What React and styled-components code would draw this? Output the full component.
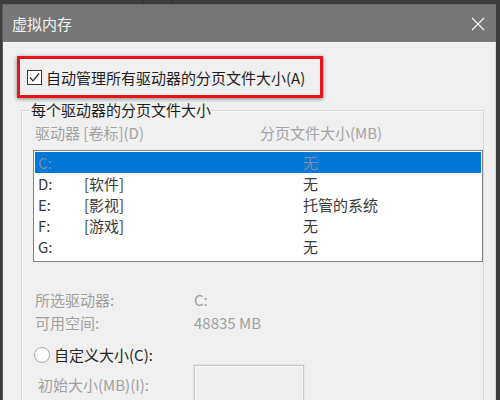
import React from 'react'
import styled, { createGlobalStyle } from 'styled-components'

const GlobalStyle = createGlobalStyle`
  html, body {
    margin: 0;
    padding: 0;
    background: #3d3d3d;
  }
  * { box-sizing: border-box; }
`

const FONT = `"Noto Sans CJK SC", "Noto Sans", sans-serif`

const Screen = styled.div`
  width: 500px;
  height: 400px;
  overflow: hidden;
  background: #3d3d3d;
  font-family: ${FONT};
  display: flex;
  flex-direction: column;
`

const TopStrip = styled.div`
  height: 4px;
  display: flex;
  flex-shrink: 0;
`

const StripSeg = styled.div`
  width: ${p => p.w}px;
  height: 100%;
  border-right: 1px solid #2c2c2c;
`

const Window = styled.div`
  margin-left: 2px;
  width: 494px;
  flex: 1;
  display: flex;
  flex-direction: column;
  border-left: 1px solid #5a5a5a;
`

const TitleBar = styled.div`
  height: 38px;
  flex-shrink: 0;
  background: #777777;
  border-top: 1px solid #6a6a6a;
  display: flex;
  align-items: center;
  justify-content: space-between;
  padding: 0 11px 0 9px;
`

const Title = styled.span`
  color: #f4f4f4;
  font-size: 15px;
  line-height: 20px;
`

const CloseIcon = () => (
  <svg width="14" height="14" viewBox="0 0 14 14">
    <path d="M1 1 L13 13 M13 1 L1 13" stroke="#f2f2f2" strokeWidth="1.3" />
  </svg>
)

const Body = styled.div`
  flex: 1;
  background: #f0f0f0;
  border-top: 1px solid #fafafa;
  border-right: 1px solid #dcdcdc;
  padding: 13px 0 0 14px;
`

const Highlight = styled.div`
  position: relative;
  z-index: 1;
  width: 306px;
  height: 42px;
  border: 3px solid #e8141b;
  box-shadow: 0 1px 4px rgba(0, 0, 0, 0.45);
  display: flex;
  align-items: center;
  gap: 4px;
  padding-left: 7px;
  padding-top: 1px;
`

const CheckBox = styled.span`
  width: 15px;
  height: 15px;
  border: 1px solid #333;
  background: #fff;
  display: flex;
  align-items: center;
  justify-content: center;
`

const CheckText = styled.span`
  font-size: 15px;
  line-height: 18px;
  color: #1e1e1e;
`

const Group = styled.fieldset`
  margin: 4px 0 0 4px;
  width: 460px;
  border: 1px solid #d9d9d9;
  box-shadow: inset 1px 1px 0 #fbfbfb;
  padding: 6px 0 0 13px;
  height: 320px;
`

const Legend = styled.legend`
  font-size: 15px;
  line-height: 16px;
  color: #1e1e1e;
  padding: 0 1px;
  margin-left: -5px;
`

const HeaderRow = styled.div`
  display: grid;
  grid-template-columns: 225px 1fr;
  font-size: 15px;
  line-height: 18px;
  color: #a3a3a3;
  margin-bottom: 8px;
`

const ListBox = styled.div`
  margin-left: -2px;
  width: 450px;
  height: 112px;
  background: #fff;
  border: 1px solid #828282;
  padding: 1px;
`

const Row = styled.div`
  display: grid;
  grid-template-columns: 46px 219px 1fr;
  height: 21px;
  align-items: center;
  padding-left: 3px;
  font-size: 15px;
  line-height: 18px;
  color: ${p => (p.selected ? '#7d8ea2' : '#3a3a3a')};
  background: ${p => (p.selected ? '#0078d7' : 'transparent')};
`

const InfoGrid = styled.div`
  margin-top: 28px;
  display: grid;
  grid-template-columns: 159px 1fr;
  row-gap: 3px;
  font-size: 15px;
  line-height: 20px;
  color: #a0a0a0;
`

const RadioRow = styled.div`
  margin: 12px 0 0 -1px;
  display: flex;
  align-items: center;
  gap: 4px;
  height: 20px;
`

const Radio = styled.span`
  width: 16px;
  height: 16px;
  border-radius: 50%;
  border: 1px solid #a8a8a8;
  background: #fff;
`

const RadioText = styled.span`
  font-size: 15px;
  line-height: 20px;
  color: #262626;
`

const SizeRow = styled.div`
  margin-top: 0;
  display: grid;
  grid-template-columns: 159px 110px;
  align-items: start;
`

const SizeLabel = styled.span`
  padding: 10px 0 0 3px;
  font-size: 15px;
  line-height: 20px;
  color: #a0a0a0;
`

const SizeInput = styled.div`
  height: 44px;
  border: 1px solid #c6c6c6;
  box-shadow: 0 0 0 1px #e6e6e6, inset 0 0 0 1px #fafafa;
  background: #efefef;
`

const drives = [
  { d: 'C:', label: '', size: '无' },
  { d: 'D:', label: '[软件]', size: '无' },
  { d: 'E:', label: '[影视]', size: '托管的系统' },
  { d: 'F:', label: '[游戏]', size: '无' },
  { d: 'G:', label: '', size: '无' },
]

export default function App () {
  return (
    <Screen>
      <GlobalStyle />
      <TopStrip>
        <StripSeg w={143} />
        <StripSeg w={30} />
      </TopStrip>
      <Window>
        <TitleBar>
          <Title>虚拟内存</Title>
          <CloseIcon />
        </TitleBar>
        <Body>
          <Highlight>
            <CheckBox>
              <svg width="11" height="11" viewBox="0 0 11 11">
                <path d="M1 5.5 L4 8.8 L10 1.5" stroke="#222" strokeWidth="1.2" fill="none" />
              </svg>
            </CheckBox>
            <CheckText>自动管理所有驱动器的分页文件大小(A)</CheckText>
          </Highlight>
          <Group>
            <Legend>每个驱动器的分页文件大小</Legend>
            <HeaderRow>
              <span>驱动器 [卷标](D)</span>
              <span>分页文件大小(MB)</span>
            </HeaderRow>
            <ListBox>
              {drives.map((r, i) => (
                <Row key={r.d} selected={i === 0}>
                  <span>{r.d}</span>
                  <span>{r.label}</span>
                  <span>{r.size}</span>
                </Row>
              ))}
            </ListBox>
            <InfoGrid>
              <span>所选驱动器:</span>
              <span>C:</span>
              <span>可用空间:</span>
              <span>48835 MB</span>
            </InfoGrid>
            <RadioRow>
              <Radio />
              <RadioText>自定义大小(C):</RadioText>
            </RadioRow>
            <SizeRow>
              <SizeLabel>初始大小(MB)(I):</SizeLabel>
              <SizeInput />
            </SizeRow>
          </Group>
        </Body>
      </Window>
    </Screen>
  )
}
